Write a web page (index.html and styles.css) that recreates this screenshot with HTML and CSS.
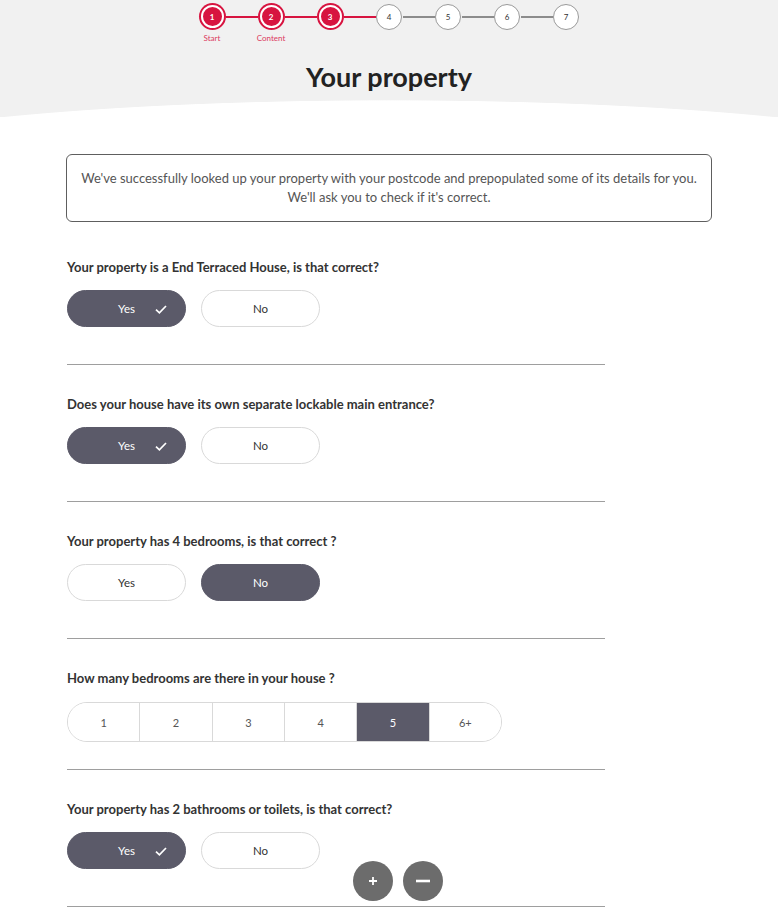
FILE: index.html
```html
<!DOCTYPE html>
<html lang="en">
<head>
  <meta charset="UTF-8" />
  <meta name="viewport" content="width=device-width, initial-scale=1.0"/>
  <title>Your property</title>
  <link rel="stylesheet" href="styles.css">
</head>
<body>
  <div id="page">
    <div id="header">
      <div class="stepper">
        <div class="step done"><span class="dot">1</span><span class="label">Start</span></div>
        <span class="link done"></span>
        <div class="step done"><span class="dot">2</span><span class="label">Content</span></div>
        <span class="link done"></span>
        <div class="step done"><span class="dot">3</span></div>
        <span class="link done"></span>
        <div class="step"><span class="dot">4</span></div>
        <span class="link"></span>
        <div class="step"><span class="dot">5</span></div>
        <span class="link"></span>
        <div class="step"><span class="dot">6</span></div>
        <span class="link"></span>
        <div class="step"><span class="dot">7</span></div>
      </div>
      <h1>Your property</h1>
    </div>

    <div id="main">
      <div class="notice">
        We've successfully looked up your property with your postcode and prepopulated some of its details for you.<br>
        We'll ask you to check if it's correct.
      </div>

      <div class="question">
        <p class="q-text">Your property is a End Terraced House, is that correct?</p>
        <div class="choices">
          <button class="choice selected">Yes
            <svg class="check" viewBox="0 0 12 9"><path d="M1 4.6l3.4 3.2L11 1"/></svg>
          </button>
          <button class="choice">No</button>
        </div>
      </div>

      <div class="question">
        <p class="q-text">Does your house have its own separate lockable main entrance?</p>
        <div class="choices">
          <button class="choice selected">Yes
            <svg class="check" viewBox="0 0 12 9"><path d="M1 4.6l3.4 3.2L11 1"/></svg>
          </button>
          <button class="choice">No</button>
        </div>
      </div>

      <div class="question">
        <p class="q-text">Your property has 4 bedrooms, is that correct ?</p>
        <div class="choices">
          <button class="choice">Yes</button>
          <button class="choice selected">No</button>
        </div>
      </div>

      <div class="question">
        <p class="q-text">How many bedrooms are there in your house ?</p>
        <div class="scale">
          <button>1</button>
          <button>2</button>
          <button>3</button>
          <button>4</button>
          <button class="selected">5</button>
          <button>6+</button>
        </div>
      </div>

      <div class="question">
        <p class="q-text">Your property has 2 bathrooms or toilets, is that correct?</p>
        <div class="choices">
          <button class="choice selected">Yes
            <svg class="check" viewBox="0 0 12 9"><path d="M1 4.6l3.4 3.2L11 1"/></svg>
          </button>
          <button class="choice">No</button>
        </div>
      </div>
    </div>

    <div class="zoom-controls">
      <button class="round" aria-label="Zoom in"><svg viewBox="0 0 10 10"><path d="M5 1v8M1 5h8"/></svg></button>
      <button class="round" aria-label="Zoom out"><svg viewBox="0 0 16 4"><path d="M1 2h14"/></svg></button>
    </div>
  </div>
</body>
</html>
```

FILE: styles.css
```css
:root {
  --red: #d71440;
  --dark: #5b5a69;
  --line: #d9d9d9;
}
* {
  box-sizing: border-box;
  margin: 0;
  padding: 0;
}
body {
  font-family: 'Lato', 'Liberation Sans', sans-serif;
  background: #fff;
  color: #333;
}
#header {
  height: 117px;
  padding-top: 3px;
  background: radial-gradient(600px 71px at 50% 171px, #fff 99%, #f1f1f1 100%);
}
.stepper {
  display: flex;
  justify-content: center;
}
.step {
  width: 27px;
  display: flex;
  flex-direction: column;
  align-items: center;
}
.dot {
  width: 26px;
  height: 26px;
  margin-top: 1px;
  border-radius: 50%;
  border: 1px solid #9a9a9a;
  background: #fff;
  display: flex;
  align-items: center;
  justify-content: center;
  font-size: 8px;
  color: #333;
}
.step.done .dot {
  width: 23px;
  height: 23px;
  margin: 2px;
  border: 2px solid #fff;
  background: var(--red);
  box-shadow: 0 0 0 2px var(--red);
  color: #fff;
  font-weight: 700;
}
.label {
  margin-top: 3px;
  font-size: 8px;
  line-height: 10px;
  color: #dc3a60;
  white-space: nowrap;
}
.link {
  width: 32px;
  height: 2px;
  margin-top: 13px;
  background: #8c8c8c;
}
.link.done {
  background: var(--red);
}
#header h1 {
  margin-top: 18px;
  text-align: center;
  font-size: 27px;
  line-height: 32px;
  font-weight: 700;
  color: #222;
}
#main {
  width: 646px;
  margin: 37px auto 0;
}
.notice {
  border: 1px solid #5e5e5e;
  border-radius: 6px;
  padding: 14px 6px;
  text-align: center;
  font-size: 13px;
  line-height: 19px;
  color: #555;
  margin-bottom: 6px;
}
.question {
  width: 538px;
  margin-left: 1px;
  padding-top: 31px;
  border-bottom: 1px solid #9e9e9e;
}
.q-text {
  font-size: 13px;
  line-height: 16px;
  font-weight: 700;
  color: #333;
}
.choices {
  display: flex;
  gap: 15px;
  margin-top: 15px;
  padding-bottom: 37px;
}
.choice {
  position: relative;
  width: 119px;
  height: 37px;
  border-radius: 19px;
  border: 1px solid var(--line);
  background: #fff;
  font-family: inherit;
  font-size: 11.5px;
  color: #333;
}
.choice.selected {
  background: var(--dark);
  border-color: var(--dark);
  color: #fff;
}
.check {
  position: absolute;
  right: 18px;
  top: 14px;
  width: 12px;
  height: 9px;
  fill: none;
  stroke: #fff;
  stroke-width: 1.7;
}
.scale {
  display: flex;
  width: 435px;
  height: 40px;
  margin: 16px 0 27px;
  border: 1px solid var(--line);
  border-radius: 20px;
  overflow: hidden;
}
.scale button {
  flex: 1;
  border: none;
  border-left: 1px solid var(--line);
  background: #fff;
  font-family: inherit;
  font-size: 11px;
  color: #555;
}
.scale button:first-child {
  border-left: none;
}
.scale button.selected {
  background: var(--dark);
  color: #fff;
}
.zoom-controls {
  position: fixed;
  left: 353px;
  bottom: 6px;
  display: flex;
  gap: 10px;
}
.round {
  width: 40px;
  height: 40px;
  border: none;
  border-radius: 50%;
  background: #6c6c6c;
  display: flex;
  align-items: center;
  justify-content: center;
}
.round svg {
  width: 10px;
  height: 10px;
  stroke: #fff;
  stroke-width: 1.8;
}
.round + .round svg {
  width: 16px;
  height: 4px;
  stroke-width: 2.6;
}
```
